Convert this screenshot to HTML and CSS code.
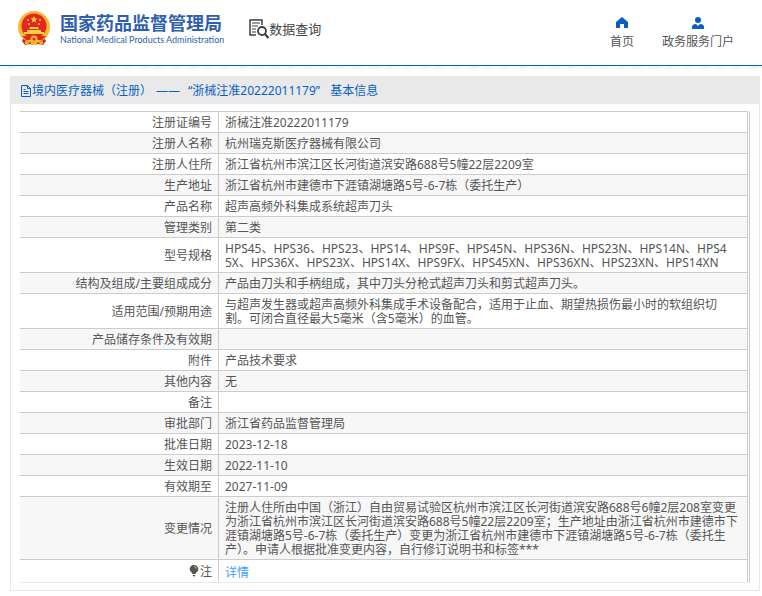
FILE: index.html
```
<!DOCTYPE html>
<html lang="zh-CN">
<head>
    <meta charset="UTF-8">
    <meta name="viewport" content="width=device-width, initial-scale=1.0">
    <title>数据查询 - 国家药品监督管理局</title>
    <link rel="stylesheet" href="styles.css">
</head>
<body>
    <header class="header">
        <a class="logo" href="#">
            <svg class="emblem" viewBox="0 0 32 35" aria-hidden="true">
                <path d="M7 25h18l3 5-3 4-5-1-4 1-4-1-5 1-3-4z" fill="#d9251c"/>
                <circle cx="16" cy="16" r="16" fill="#f3b92f"/>
                <circle cx="16" cy="15" r="12.5" fill="#e3261f"/>
                <path d="M16 5l1 2.3 2.5.2-1.9 1.6.6 2.4-2.2-1.3-2.2 1.3.6-2.4-1.9-1.6 2.5-.2z" fill="#fbd23c"/>
                <g fill="#fbd23c">
                    <circle cx="10" cy="9" r="1"/>
                    <circle cx="22" cy="9" r="1"/>
                    <circle cx="11" cy="13" r="1"/>
                    <circle cx="21" cy="13" r="1"/>
                    <path d="M12 16h8l1 2h-10zM9 19h14v2h3v2H6v-2h3z"/>
                </g>
                <path d="M4 25h24l-4 4H8z" fill="#e3261f"/>
                <circle cx="16" cy="28" r="3.500" fill="#f3b92f"/>
                <circle cx="16" cy="28" r="1.500" fill="#e3261f"/>
                <path d="M7 30l4 1-1 3-3-1zM25 30l-4 1 1 3 3-1zM13 32h6v2h-6z" fill="#f3b92f"/>
            </svg>
            <span class="logo-text">
                <span class="logo-cn">国家药品监督管理局</span>
                <span class="logo-en">National Medical Products Administration</span>
            </span>
        </a>
        <a class="search-title" href="#">
            <svg class="search-icon" viewBox="0 0 20 20" aria-hidden="true">
                <path d="M13 6V1H1v15h6" fill="none" stroke="#3c3c46" stroke-width="1.500"/>
                <path d="M3 4h8M3 7h6M3 10h4M3 13h4" stroke="#3c3c46" stroke-width="1.200"/>
                <circle cx="13" cy="12" r="4" fill="#fff" stroke="#3c3c46" stroke-width="1.800"/>
                <path d="M16 15l3.500 4" stroke="#3c3c46" stroke-width="2.200"/>
            </svg>
            数据查询
        </a>
        <nav class="nav">
            <a href="#">
                <svg class="nav-icon" viewBox="0 0 12 12" aria-hidden="true">
                    <path d="M6 0l6 5v6h-4V7H4v4H0V5z" fill="#0a5fc4"/>
                </svg>
                首页
            </a>
            <a href="#">
                <svg class="nav-icon" viewBox="0 0 12 12" aria-hidden="true">
                    <circle cx="6" cy="3" r="3" fill="#0a5fc4"/>
                    <path d="M0 12v-2q0-3 4-3l2 2 2-2q4 0 4 3v2z" fill="#0a5fc4"/>
                </svg>
                政务服务门户
            </a>
        </nav>
    </header>
    <div class="header-shade"></div>

    <main class="panel">
        <h1 class="panel-title">
            <svg class="doc-icon" viewBox="0 0 12 12" aria-hidden="true">
                <path d="M1.500.5h6l3 3v8h-9zM7.500.5v3h3M3.500 4.500h2M3.500 6.500h5M3.500 8.500h5" fill="none" stroke="#0a5fc4"/>
            </svg>
            <span>境内医疗器械（注册）</span>
            <span class="dash">——</span>
            <span class="cert">“浙械注准20222011179”</span>
            <span>基本信息</span>
        </h1>
        <div class="table-wrap">
            <table class="info">
                <tr><th scope="row">注册证编号</th><td>浙械注准20222011179</td></tr>
                <tr><th scope="row">注册人名称</th><td>杭州瑞克斯医疗器械有限公司</td></tr>
                <tr><th scope="row">注册人住所</th><td>浙江省杭州市滨江区长河街道滨安路688号5幢22层2209室</td></tr>
                <tr><th scope="row">生产地址</th><td>浙江省杭州市建德市下涯镇湖塘路5号-6-7栋（委托生产）</td></tr>
                <tr><th scope="row">产品名称</th><td>超声高频外科集成系统超声刀头</td></tr>
                <tr><th scope="row">管理类别</th><td>第二类</td></tr>
                <tr><th scope="row">型号规格</th><td>HPS45、HPS36、HPS23、HPS14、HPS9F、HPS45N、HPS36N、HPS23N、HPS14N、HPS4<br>5X、HPS36X、HPS23X、HPS14X、HPS9FX、HPS45XN、HPS36XN、HPS23XN、HPS14XN</td></tr>
                <tr><th scope="row">结构及组成/主要组成成分</th><td>产品由刀头和手柄组成，其中刀头分枪式超声刀头和剪式超声刀头。</td></tr>
                <tr><th scope="row">适用范围/预期用途</th><td>与超声发生器或超声高频外科集成手术设备配合，适用于止血、期望热损伤最小时的软组织切<br>割。可闭合直径最大5毫米（含5毫米）的血管。</td></tr>
                <tr><th scope="row">产品储存条件及有效期</th><td></td></tr>
                <tr><th scope="row">附件</th><td>产品技术要求</td></tr>
                <tr><th scope="row">其他内容</th><td>无</td></tr>
                <tr><th scope="row">备注</th><td></td></tr>
                <tr><th scope="row">审批部门</th><td>浙江省药品监督管理局</td></tr>
                <tr><th scope="row">批准日期</th><td>2023-12-18</td></tr>
                <tr><th scope="row">生效日期</th><td>2022-11-10</td></tr>
                <tr><th scope="row">有效期至</th><td>2027-11-09</td></tr>
                <tr><th scope="row">变更情况</th><td>注册人住所由中国（浙江）自由贸易试验区杭州市滨江区长河街道滨安路688号6幢2层208室变更为浙江省杭州市滨江区长河街道滨安路688号5幢22层2209室；生产地址由浙江省杭州市建德市下涯镇湖塘路5号-6-7栋（委托生产）变更为浙江省杭州市建德市下涯镇湖塘路5号-6-7栋（委托生产）。申请人根据批准变更内容，自行修订说明书和标签***</td></tr>
                <tr class="note">
                    <th scope="row"><svg class="bulb" viewBox="0 0 10 12" aria-hidden="true"><path d="M5 0a4 4 0 0 1 2.500 7.300L6.500 9h-3l-1-1.700A4 4 0 0 1 5 0zM3.500 10h3l-1 1.500h-1z" fill="#555"/><path d="M5.500 1.500q1.500.5 1.500 2" fill="none" stroke="#ddd"/></svg>注</th>
                    <td><a href="#">详情</a></td>
                </tr>
            </table>
        </div>
    </main>
</body>
</html>
```

FILE: styles.css
```
* {
    box-sizing: border-box;
}

body {
    margin: 0;
    background: #fff;
    color: #555;
    font-family: "Noto Sans", "Noto Sans CJK SC", sans-serif;
    font-size: 12px;
    line-height: 14px;
}

a {
    color: inherit;
    text-decoration: none;
}

/* Header */
.header {
    display: flex;
    align-items: center;
    height: 66px;
    padding: 0 28px 8px 18px;
    border-bottom: 1px solid #0a5fc4;
}

/* Thin hatched strip under the header line */
.header-shade {
    height: 3px;
    background: repeating-linear-gradient(135deg, #fff 0, #fff 1px, #eee 1px, #eee 2px);
}

.logo {
    display: flex;
    align-items: center;
    gap: 10px;
    color: #2f5fae;
}

.emblem {
    width: 32px;
    height: 35px;
}

.logo-text {
    display: flex;
    flex-direction: column;
}

.logo-cn {
    font-size: 18px;
    font-weight: bold;
    line-height: 22px;
}

.logo-en {
    font-family: Lato, sans-serif;
    font-size: 9px;
    font-weight: normal;
    line-height: 12px;
}

.search-title {
    display: flex;
    align-items: center;
    margin-left: 25px;
    color: #444;
    font-size: 13px;
}

.search-icon {
    width: 20px;
    height: 20px;
}

.nav {
    display: flex;
    gap: 28px;
    margin-top: 8px;
    margin-left: auto;
}

.nav a {
    display: flex;
    flex-direction: column;
    align-items: center;
    gap: 6px;
}

.nav-icon {
    width: 12px;
    height: 12px;
}

/* Detail panel */
.panel {
    margin: 7px 2px 0 10px;
    border: 1px solid #e9e9e9;
}

.panel-title {
    display: flex;
    align-items: center;
    height: 27px;
    margin: 0;
    padding-left: 9px;
    background: #e9e9e9;
    color: #0a5fc4;
    font-size: 12px;
    font-weight: normal;
}

.doc-icon {
    width: 12px;
    height: 12px;
}

.dash {
    margin: 0 8px 0 4px;
}

.cert {
    margin-right: 10px;
}

.table-wrap {
    margin: 7px 9px;
    padding-right: 1px;
    border-right: 1px solid #ccc;
}

.info {
    width: 100%;
    border-collapse: separate;
    border-spacing: 0;
    border-bottom: 1px solid #e9e9e9;
}

.info th,
.info td {
    padding: 4px 6px 2px;
    border-top: 1px solid #ccc;
    border-right: 1px solid #ccc;
    height: 21px;
    font-weight: normal;
    vertical-align: middle;
}

.info th {
    width: 199px;
    text-align: right;
}

.info td {
    text-align: left;
    word-break: break-all;
}

.info tr:nth-child(even) {
    background: #f7f7f7;
}

.info .note th,
.info .note td {
    height: 23px;
}

.info .note td {
    padding: 6px 6px 2px;
}

.note a {
    color: #409eff;
}

.bulb {
    width: 10px;
    height: 12px;
    margin-right: 1px;
    vertical-align: -1px;
}
```
